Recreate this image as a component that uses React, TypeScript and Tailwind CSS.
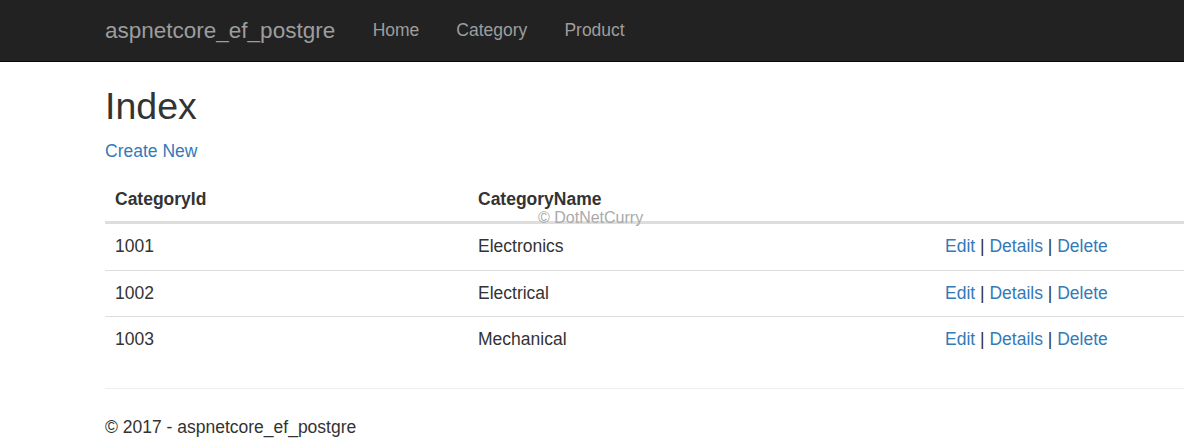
import React from 'react';

const categories = [
  { id: 1001, name: 'Electronics' },
  { id: 1002, name: 'Electrical' },
  { id: 1003, name: 'Mechanical' },
];

const App = () => {
  return (
    <div className="relative h-[438px] w-[1184px] overflow-hidden bg-white text-[17.5px] leading-[25px] text-[#333] font-['Liberation_Sans',Arial,sans-serif]">
      {/* Navbar */}
      <nav className="h-[62px] w-full border-b border-[#080808] bg-[#222]">
        <div className="flex h-full items-center pb-[1px] pl-[105px]">
          <a className="pr-[19px] text-[22.5px] leading-[25px] text-[#9d9d9d]">aspnetcore_ef_postgre</a>
          <ul className="flex">
            <li><a className="block px-[18.5px] text-[#9d9d9d]">Home</a></li>
            <li><a className="block px-[18.5px] text-[#9d9d9d]">Category</a></li>
            <li><a className="block px-[18.5px] text-[#9d9d9d]">Product</a></li>
          </ul>
        </div>
      </nav>

      {/* Body */}
      <div className="ml-[105px] w-[1425px]">
        <h2 className="mt-[24px] mb-[12px] text-[37.5px] leading-[41px] font-normal">Index</h2>
        <p className="mb-[14px]">
          <a className="text-[#337ab7]">Create New</a>
        </p>
        <table className="w-full border-collapse">
          <thead>
            <tr className="border-b-[3px] border-[#ddd]">
              <th className="w-[363px] px-[10px] py-[9px] text-left font-bold">CategoryId</th>
              <th className="w-[467px] px-[10px] py-[9px] text-left font-bold">CategoryName</th>
              <th className="px-[10px] py-[9px]"></th>
            </tr>
          </thead>
          <tbody>
            {categories.map((c, i) => (
              <tr key={c.id} className={i > 0 ? 'border-t border-[#ddd]' : ''}>
                <td className="px-[10px] py-[10.25px]">{c.id}</td>
                <td className="px-[10px] py-[10.25px]">{c.name}</td>
                <td className="px-[10px] py-[10.25px]">
                  <a className="text-[#337ab7]">Edit</a> | <a className="text-[#337ab7]">Details</a> |{' '}
                  <a className="text-[#337ab7]">Delete</a>
                </td>
              </tr>
            ))}
          </tbody>
        </table>
        <hr className="mt-[25px] mb-[26px] border-0 border-t border-[#eee]" />
        <footer>
          <p>© 2017 - aspnetcore_ef_postgre</p>
        </footer>
      </div>

      {/* Watermark */}
      <span className="absolute left-[538px] top-[208px] text-[16px] leading-[20px] text-[#aaa]">© DotNetCurry</span>
    </div>
  );
};

export default App;
